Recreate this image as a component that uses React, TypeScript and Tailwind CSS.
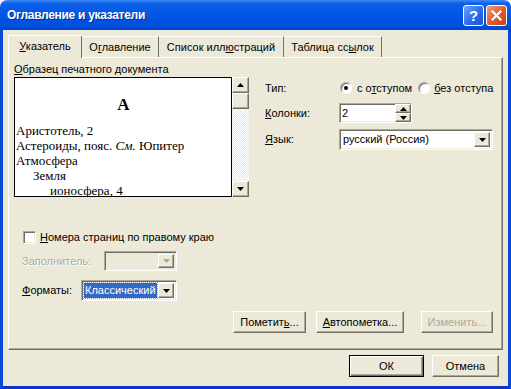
import React from "react";

const raised =
  "border border-t-white border-l-white border-r-[#716F64] border-b-[#716F64] shadow-[inset_-1px_-1px_0_#ACA899]";
const sunken =
  "border border-t-[#ACA899] border-l-[#ACA899] border-r-white border-b-white shadow-[inset_1px_1px_0_#716F64,inset_-1px_-1px_0_#F1EFE2]";

const Arrow = ({ up = false, dim = false }: { up?: boolean; dim?: boolean }) => (
  <svg width="7" height="4" viewBox="0 0 7 4">
    <path d={up ? "M3.5 0 L7 4 L0 4 Z" : "M0 0 L7 0 L3.5 4 Z"} fill={dim ? "#ACA899" : "#000"} />
  </svg>
);

const DropBtn = ({ dim = false }: { dim?: boolean }) => (
  <div className={`w-[16px] h-full shrink-0 flex items-center justify-center bg-[#ECE9D8] ${raised}`}>
    <Arrow dim={dim} />
  </div>
);

const Btn = ({
  children,
  className = "",
  disabled = false,
  def = false,
}: {
  children: React.ReactNode;
  className?: string;
  disabled?: boolean;
  def?: boolean;
}) => (
  <div
    className={`h-[22px] flex items-center justify-center bg-[#ECE9D8] ${
      def
        ? "border border-black shadow-[inset_1px_1px_0_#fff,inset_-1px_-1px_0_#716F64,inset_-2px_-2px_0_#ACA899]"
        : raised
    } ${disabled ? "text-[#ACA899]" : "text-black"} ${className}`}
  >
    {children}
  </div>
);

const Radio = ({ checked = false }: { checked?: boolean }) => (
  <div className="w-[12px] h-[12px] rounded-full bg-white border border-t-[#ACA899] border-l-[#ACA899] border-r-white border-b-white shadow-[inset_1px_1px_0_#716F64] flex items-center justify-center">
    {checked && <div className="w-[4px] h-[4px] rounded-full bg-black" />}
  </div>
);

export default function App() {
  return (
    <div className="w-[511px] h-[389px] bg-white flex flex-col font-['Liberation_Sans',Arial,sans-serif] text-[11px] text-black select-none">
      {/* title bar */}
      <div className="h-[30px] rounded-t-[7px] bg-[linear-gradient(to_bottom,#3D8CF6_0%,#0B5FE9_12%,#0055E5_55%,#0050DD_85%,#0045CC_100%)] flex items-center pl-[7px] pr-[4px]">
        <span className="text-white font-bold text-[12px] tracking-[-0.3px] [text-shadow:1px_1px_0_#0A2E8C]">
          Оглавление и указатели
        </span>
        <div className="ml-auto flex gap-[2px]">
          <div className="w-[21px] h-[21px] rounded-[3px] border border-white bg-[linear-gradient(135deg,#6FA2FF,#2A68E8_60%,#1C4FCC)] flex items-center justify-center text-white font-bold text-[15px] leading-none">
            ?
          </div>
          <div className="w-[21px] h-[21px] rounded-[3px] border border-white bg-[linear-gradient(135deg,#F0A080,#E2582C_55%,#C6401A)] flex items-center justify-center">
            <svg width="11" height="11" viewBox="0 0 11 11">
              <path d="M1.5 1.5 L9.5 9.5 M9.5 1.5 L1.5 9.5" stroke="#fff" strokeWidth="2.2" strokeLinecap="square" />
            </svg>
          </div>
        </div>
      </div>

      {/* body */}
      <div className="flex-1 flex flex-col bg-[#ECE9D8] border-x-[3px] border-b-[3px] border-x-[#0849D8] border-b-[#0736C8] pt-[4px] pl-[5px]">
        {/* tabs */}
        <div className="h-[23px] flex items-end">
          <div className="w-[74px] h-[23px] bg-[#ECE9D8] border-l border-t border-white border-r border-r-[#716F64] rounded-t-[2px] flex items-center justify-center pb-[1px] relative z-10 -mb-[1px]">
            <span>
              <u>У</u>казатель
            </span>
          </div>
          <div className="w-[77px] h-[21px] border-t border-white border-r border-r-[#716F64] flex items-center justify-center">
            <span>
              О<u>г</u>лавление
            </span>
          </div>
          <div className="w-[125px] h-[21px] border-t border-white border-r border-r-[#716F64] flex items-center justify-center">
            <span>
              Список илл<u>ю</u>страций
            </span>
          </div>
          <div className="w-[98px] h-[21px] border-t border-white border-r border-r-[#716F64] flex items-center justify-center">
            <span>
              Таблица сс<u>ы</u>лок
            </span>
          </div>
        </div>

        {/* panel */}
        <div className="w-[495px] h-[293px] border border-t-white border-l-white border-r-[#716F64] border-b-[#716F64] shadow-[inset_-1px_-1px_0_#ACA899] flex flex-col">
          <div className="flex pl-[5px]">
            {/* preview */}
            <div className="w-[235px] flex flex-col pt-[5px]">
              <div className="h-[13px] leading-[13px]">
                <u>О</u>бразец печатного документа
              </div>
              <div className="mt-[1px] flex h-[120px]">
                <div className="w-[218px] h-[120px] border border-black bg-white overflow-hidden pl-[1px] font-['Liberation_Serif','Times_New_Roman',serif] text-[13px] leading-[15px]">
                  <div className="pt-[17px] h-[37px] text-center font-bold text-[17px] leading-[20px]">А</div>
                  <div className="mt-[8px]">Аристотель, 2</div>
                  <div>
                    Астероиды, пояс. <i>См.</i> Юпитер
                  </div>
                  <div>Атмосфера</div>
                  <div className="pl-[17px]">Земля</div>
                  <div className="pl-[34px]">ионосфера, 4</div>
                </div>
                <div className="w-[17px] h-[120px] flex flex-col bg-[repeating-conic-gradient(#ffffff_0_25%,#ECE9D8_0_50%)] bg-[length:2px_2px]">
                  <div className={`h-[16px] flex items-center justify-center bg-[#ECE9D8] ${raised}`}>
                    <Arrow up />
                  </div>
                  <div className={`h-[16px] bg-[#ECE9D8] ${raised}`} />
                  <div className={`mt-auto h-[16px] flex items-center justify-center bg-[#ECE9D8] ${raised}`}>
                    <Arrow />
                  </div>
                </div>
              </div>
            </div>

            {/* options */}
            <div className="ml-[16px] flex flex-col pt-[22px]">
              <div className="h-[16px] flex items-center">
                <span className="w-[75px]">Тип:</span>
                <Radio checked />
                <span className="ml-[5px]">
                  с о<u>т</u>ступом
                </span>
                <div className="ml-[6px]">
                  <Radio />
                </div>
                <span className="ml-[4px]">
                  <u>б</u>ез отступа
                </span>
              </div>
              <div className="mt-[7px] h-[20px] flex items-center">
                <span className="w-[74px]">
                  <u>К</u>олонки:
                </span>
                <div className={`w-[73px] h-[20px] bg-white flex items-center ${sunken}`}>
                  <span className="pl-[2px] flex-1">2</span>
                  <div className="w-[16px] h-full flex flex-col">
                    <div className={`flex-1 flex items-center justify-center bg-[#ECE9D8] ${raised}`}>
                      <Arrow up />
                    </div>
                    <div className={`flex-1 flex items-center justify-center bg-[#ECE9D8] ${raised}`}>
                      <Arrow />
                    </div>
                  </div>
                </div>
              </div>
              <div className="mt-[6px] h-[21px] flex items-center">
                <span className="w-[74px]">
                  <u>Я</u>зык:
                </span>
                <div className={`w-[154px] h-[21px] bg-white flex items-center p-[2px] ${sunken}`}>
                  <span className="pl-[1px] flex-1">русский (Россия)</span>
                  <DropBtn />
                </div>
              </div>
            </div>
          </div>

          {/* lower options */}
          <div className="mt-[34px] pl-[14px] h-[13px] flex items-center">
            <div className={`w-[13px] h-[13px] bg-white ${sunken}`} />
            <span className="ml-[4px]">
              <u>Н</u>омера страниц по правому краю
            </span>
          </div>
          <div className="mt-[7px] pl-[13px] h-[20px] flex items-center">
            <span className="w-[82px] text-[#ACA899] [text-shadow:1px_1px_0_#fff]">Заполнитель:</span>
            <div className={`w-[73px] h-[20px] bg-[#ECE9D8] flex items-center justify-end p-[2px] ${sunken}`}>
              <DropBtn dim />
            </div>
          </div>
          <div className="mt-[9px] pl-[13px] h-[21px] flex items-center">
            <span className="w-[59px]">
              <u>Ф</u>орматы:
            </span>
            <div className={`w-[96px] h-[21px] bg-white flex items-center p-[2px] ${sunken}`}>
              <span className="flex-1 h-full flex items-center">
                <span className="bg-[#316AC5] text-white px-[1px] h-[15px] leading-[15px] outline outline-1 outline-dotted outline-[#CE9A5A]">
                  Классический
                </span>
              </span>
              <DropBtn />
            </div>
          </div>
          <div className="mt-[10px] h-[21px] flex justify-end pr-[9px]">
            <Btn className="w-[73px] h-[21px]">
              Пометит<u>ь</u>...
            </Btn>
            <Btn className="ml-[10px] w-[88px] h-[21px]">
              <u>А</u>втопометка...
            </Btn>
            <Btn className="ml-[17px] w-[72px] h-[21px]" disabled>
              Изменить...
            </Btn>
          </div>
        </div>

        {/* dialog buttons */}
        <div className="mt-[5px] flex justify-end pr-[9px]">
          <Btn def className="w-[75px]">
            ОК
          </Btn>
          <Btn className="ml-[8px] w-[67px]">Отмена</Btn>
        </div>
      </div>
    </div>
  );
}
